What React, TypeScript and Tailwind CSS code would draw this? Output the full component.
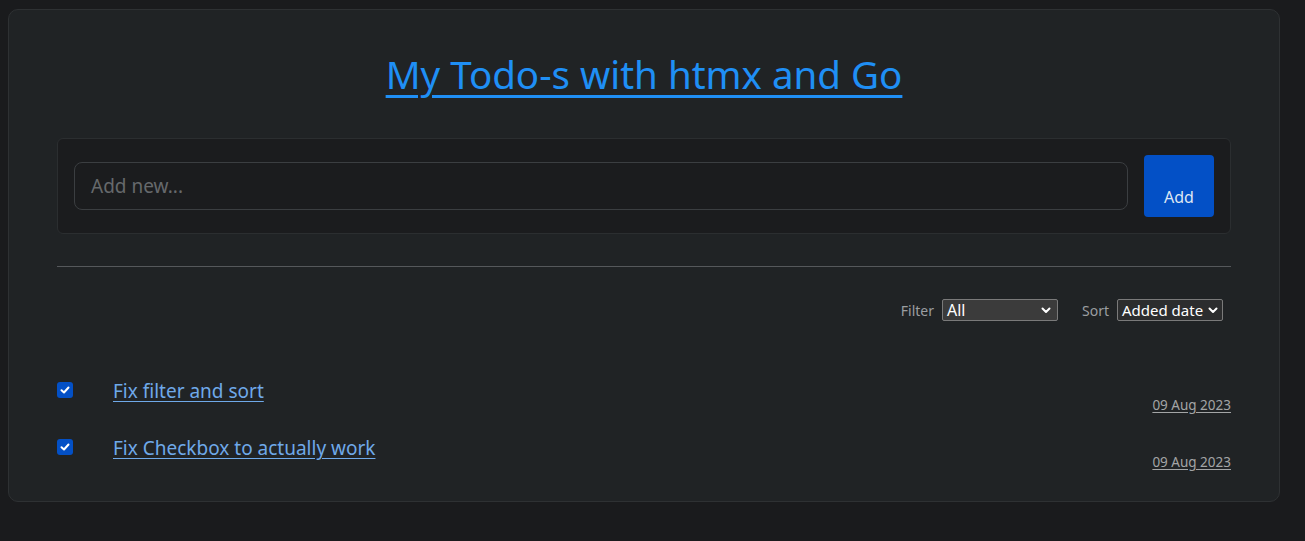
import React from "react";

function Chevron() {
  return (
    <svg width="10" height="7" viewBox="0 0 10 7" className="shrink-0">
      <path d="M1.5 1.5 L5 5 L8.5 1.5" fill="none" stroke="#ffffff" strokeWidth="2" strokeLinecap="round" strokeLinejoin="round" />
    </svg>
  );
}

function Check() {
  return (
    <div className="w-4 h-4 rounded-[3px] bg-[#0350c6] flex items-center justify-center">
      <svg width="10" height="8" viewBox="0 0 10 8">
        <path d="M1.5 4.2 L4 6.5 L8.5 1.5" fill="none" stroke="#ffffff" strokeWidth="2" strokeLinecap="round" strokeLinejoin="round" />
      </svg>
    </div>
  );
}

function TodoRow({ text }: { text: string }) {
  return (
    <div className="flex items-start h-[57px]">
      <div className="mt-[8px] w-[56px] shrink-0">
        <Check />
      </div>
      <a className="text-[19px] leading-[30px] text-[#6fa9e9] underline underline-offset-[3px] mt-[2px]" href="#">
        {text}
      </a>
      <div className="flex-1" />
      <a className="mt-[21px] text-[13.5px] leading-[20px] text-[#a3a5a6] underline underline-offset-2" href="#">
        09 Aug 2023
      </a>
    </div>
  );
}

export default function App() {
  return (
    <div
      className="min-h-[541px] bg-[#1a1b1d] pl-2 pt-[9px]"
      style={{ fontFamily: '"Noto Sans", "Open Sans", sans-serif' }}
    >
      <div className="w-[1272px] h-[493px] bg-[#202325] border border-[#2e3133] rounded-[10px] px-12 flex flex-col">
        <div className="h-[128px] flex items-center justify-center">
          <a href="#" className="text-[38.5px] leading-[48px] text-[#1f8ff5] underline decoration-[3px] underline-offset-[6px]">
            My Todo-s with htmx and Go
          </a>
        </div>

        <div className="h-[96px] bg-[#1b1c1e] border border-[#2b2e30] rounded-[6px] px-4 flex items-center gap-4">
          <div className="flex-1 h-[48px] border border-[#3b3e41] rounded-[8px] bg-[#1b1c1e] flex items-center px-4">
            <span className="text-[19px] text-[#66696c]">Add new...</span>
          </div>
          <div className="w-[70px] h-[62px] bg-[#0350c6] rounded-[4px] flex items-end justify-center pb-2">
            <span className="text-[16px] leading-[24px] text-[#dde6f3]">Add</span>
          </div>
        </div>

        <div className="mt-8 h-px bg-[#55585b]" />

        <div className="mt-[32px] flex items-center justify-end pr-2 h-[22px]">
          <span className="text-[14px] text-[#9b9ea1] mr-2">Filter</span>
          <div className="w-[116px] h-[22px] bg-[#3b3b3b] border border-[#7a7a7a] rounded-[2px] flex items-center justify-between pl-1 pr-[6px]">
            <span className="text-[16px] leading-[20px] text-white">All</span>
            <Chevron />
          </div>
          <span className="text-[14px] text-[#9b9ea1] ml-6 mr-2">Sort</span>
          <div className="w-[106px] h-[22px] bg-[#2c2d2e] border border-[#7a7a7a] rounded-[2px] flex items-center justify-between pl-1 pr-[4px]">
            <span className="text-[15px] leading-[20px] text-white whitespace-nowrap">Added date</span>
            <Chevron />
          </div>
        </div>

        <div className="mt-[53px] flex flex-col">
          <TodoRow text="Fix filter and sort" />
          <TodoRow text="Fix Checkbox to actually work" />
        </div>
      </div>
    </div>
  );
}
